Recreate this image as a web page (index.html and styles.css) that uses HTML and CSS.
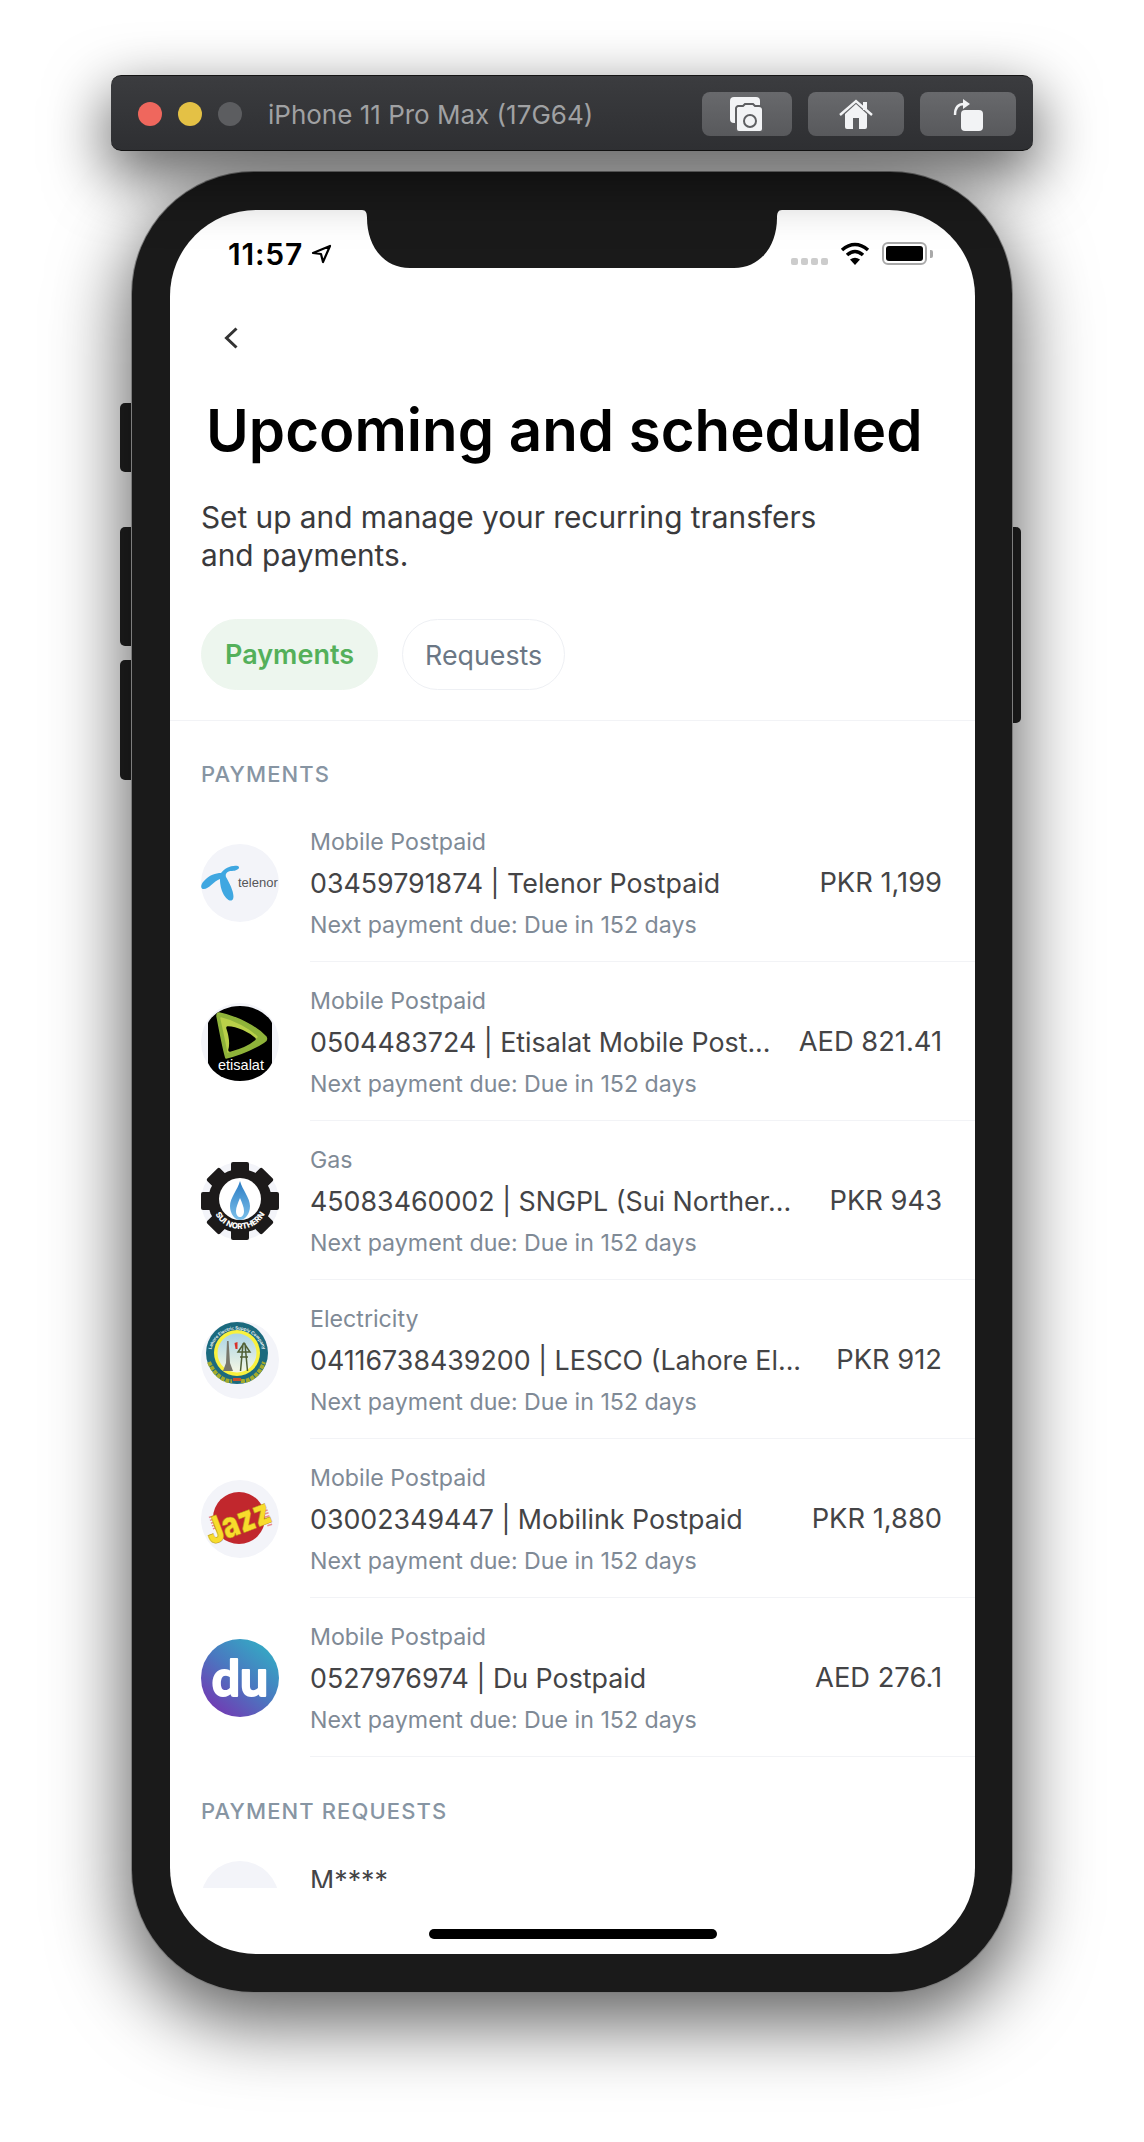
FILE: index.html
```html
<!DOCTYPE html>
<html lang="en">
  <head>
    <meta charset="UTF-8" />
    <title>Upcoming and scheduled</title>
    <link rel="stylesheet" href="styles.css">
  </head>
  <body>
    <div class="toolbar">
      <span class="light red"></span>
      <span class="light yellow"></span>
      <span class="light gray"></span>
      <span class="device-name">iPhone 11 Pro Max (17G64)</span>
      <div class="tool-btn tool-camera">
        <svg width="34" height="35" viewBox="0 0 34 35">
          <rect x="0" y="0" width="30" height="26" rx="4" fill="#f2f3f5" />
          <path d="M8 9h5l2-2h8l2 2h4a4 4 0 0 1 4 4v19a3 3 0 0 1-3 3H9a3 3 0 0 1-3-3V11a3 3 0 0 1 2-2z" fill="#f2f3f5" stroke="#5e5f62" stroke-width="2" />
          <circle cx="20" cy="24" r="6" fill="none" stroke="#5e5f62" stroke-width="2" />
        </svg>
      </div>
      <div class="tool-btn tool-home">
        <svg width="34" height="31" viewBox="0 0 34 31">
          <rect x="24" y="3" width="4" height="8" fill="#f2f3f5" />
          <path d="M6 15L17 5l11 10v13a2 2 0 0 1-2 2H8a2 2 0 0 1-2-2z" fill="#f2f3f5" />
          <path d="M1 16L17 2l16 14" fill="none" stroke="#f2f3f5" stroke-width="2.4" />
          <rect x="14" y="19" width="6" height="11" fill="#5e5f62" />
        </svg>
      </div>
      <div class="tool-btn tool-rotate">
        <svg width="31" height="33" viewBox="0 0 31 33">
          <rect x="8" y="12" width="22" height="21" rx="4" fill="#f2f3f5" />
          <path d="M2 17C2 10 5 6 11 6" fill="none" stroke="#f2f3f5" stroke-width="2.4" />
          <path d="M10 1l7 5-7 5z" fill="#f2f3f5" />
        </svg>
      </div>
    </div>

    <div class="phone">
      <span class="side-btn btn-mute"></span>
      <span class="side-btn btn-up"></span>
      <span class="side-btn btn-down"></span>
      <span class="side-btn btn-power"></span>

      <div class="screen">
        <svg class="notch" width="420" height="58" viewBox="0 0 420 58">
          <path d="M0 0C4 0 5 3 5 8C5 34 20 58 48 58H372C400 58 415 34 415 8C415 3 416 0 420 0Z" fill="#1a1a1a" />
        </svg>

        <div class="scroll">
          <div class="status-bar">
            <div class="status-left">
              <span class="time">11:57</span>
              <svg width="21" height="20" viewBox="0 0 21 20">
                <path d="M2 9L19 2l-7 16-2-8z" fill="none" stroke="#000" stroke-width="2.2" stroke-linejoin="round" />
              </svg>
            </div>
            <div class="status-right">
              <div class="signal"><i></i><i></i><i></i><i></i></div>
              <svg class="wifi" width="30" height="23" viewBox="0 0 30 23">
                <path d="M2 8Q15 -3 28 8" fill="none" stroke="#000" stroke-width="3.6" />
                <path d="M7 13Q15 6 23 13" fill="none" stroke="#000" stroke-width="3.6" />
                <path d="M10 17.5Q15 14 20 17.5L15 23z" fill="#000" />
              </svg>
              <div class="battery"><span class="battery-level"></span></div>
              <span class="battery-nub"></span>
            </div>
          </div>

          <div class="nav">
            <svg width="14" height="22" viewBox="0 0 14 22">
              <path d="M12.5 1.5L2.5 11l10 9.5" fill="none" stroke="#333" stroke-width="3" />
            </svg>
          </div>

          <h1 class="title">Upcoming and scheduled</h1>
          <p class="subtitle">Set up and manage your recurring transfers<br>and payments.</p>

          <div class="tabs">
            <div class="tab tab-active">Payments</div>
            <div class="tab">Requests</div>
          </div>

          <div class="section-head section-first">PAYMENTS</div>

          <div class="row">
            <svg class="logo" viewBox="0 0 78 78">
              <circle cx="39" cy="39" r="39" fill="#f3f4f9" />
              <path d="M37 22C40 24 36 27 31 27C26 27 24 30 25 33C29 40 34 50 32 55C30 59 24 55 21 47C19 41 19 37 19 35C13 37 7 46 2 45C-1 44 0 40 3 37C8 31 15 29 20 29C24 24 30 21 37 22Z" fill="#3fa7e1" />
              <text class="logo-telenor" x="37" y="43">telenor</text>
            </svg>
            <div class="row-body">
              <div class="row-label">Mobile Postpaid</div>
              <div class="row-main"><span>03459791874 | Telenor Postpaid</span><span class="row-amount">PKR 1,199</span></div>
              <div class="row-due">Next payment due: Due in 152 days</div>
            </div>
          </div>

          <div class="row">
            <svg class="logo" viewBox="0 0 78 78">
              <circle cx="39" cy="39" r="39" fill="#f3f4f9" />
              <path d="M7 20C12 10 25 3 39 3C53 3 66 10 71 20V60C66 71 53 78 39 78C25 78 12 71 7 60Z" fill="#000" />
              <path d="M18 10C35 13 56 24 65 34C66 36 65 38 63 39C52 46 38 52 25 55C23 50 20 34 16 13C16 11 16 10 18 10Z" fill="#8fb33a" stroke="#8fb33a" stroke-width="1.5" stroke-linejoin="round" />
              <path d="M20 15C33 18 48 26 56 34C47 41 37 46 27 49C26 42 23 29 20 15Z" fill="#b9d049" stroke="#b9d049" stroke-width="1.5" stroke-linejoin="round" />
              <path d="M27 25C36 25 47 31 53 36C47 41 37 45 29 47C31 40 29 31 27 25Z" fill="#000" stroke="#000" stroke-width="3.5" stroke-linejoin="round" />
              <text class="logo-etisalat" x="40" y="67">etisalat</text>
            </svg>
            <div class="row-body">
              <div class="row-label">Mobile Postpaid</div>
              <div class="row-main"><span>0504483724 | Etisalat Mobile Post...</span><span class="row-amount">AED 821.41</span></div>
              <div class="row-due">Next payment due: Due in 152 days</div>
            </div>
          </div>

          <div class="row">
            <svg class="logo" viewBox="0 0 78 78">
              <defs>
                <path id="sui-arc" d="M11 39A28 28 0 0 0 67 39" />
                <linearGradient id="flame" x1="0" y1="0" x2="0" y2="1">
                  <stop offset="0" stop-color="#2a7cc4" />
                  <stop offset="1" stop-color="#7cc0ea" />
                </linearGradient>
              </defs>
              <circle cx="39" cy="39" r="39" fill="#f3f4f9" />
              <g fill="#1c1a1a">
                <circle cx="39" cy="39" r="32" />
                <rect x="30" y="0" width="18" height="78" rx="2" />
                <rect x="0" y="30" width="78" height="18" rx="2" />
                <rect x="30" y="0" width="18" height="78" rx="2" transform="rotate(45 39 39)" />
                <rect x="30" y="0" width="18" height="78" rx="2" transform="rotate(-45 39 39)" />
              </g>
              <circle cx="39" cy="37" r="21" fill="#fff" />
              <path d="M39 19C41 27 49 36 49 44C49 52 44 58 39 58C34 58 29 52 29 44C29 36 37 27 39 19Z" fill="url(#flame)" />
              <path d="M39 36C41 41 43 45 43 49C43 53 41 55 39 55C37 55 35 53 35 49C35 45 37 41 39 36Z" fill="#fff" />
              <text class="logo-sui"><textPath href="#sui-arc" startOffset="50%">SUI NORTHERN</textPath></text>
            </svg>
            <div class="row-body">
              <div class="row-label">Gas</div>
              <div class="row-main"><span>45083460002 | SNGPL (Sui Norther...</span><span class="row-amount">PKR 943</span></div>
              <div class="row-due">Next payment due: Due in 152 days</div>
            </div>
          </div>

          <div class="row">
            <svg class="logo" viewBox="0 0 78 78">
              <defs>
                <path id="lesco-arc" d="M9.5 35A26.5 26.5 0 0 1 62.5 35" />
                <linearGradient id="lesco-sky" x1="0" y1="0" x2="0" y2="1">
                  <stop offset="0" stop-color="#a9d3e6" />
                  <stop offset="1" stop-color="#f6f8e4" />
                </linearGradient>
              </defs>
              <circle cx="39" cy="39" r="39" fill="#f3f4f9" />
              <circle cx="36" cy="32" r="31" fill="#1b6a7e" />
              <circle cx="36" cy="32" r="23" fill="#f8f13e" />
              <circle cx="36" cy="32" r="19.5" fill="url(#lesco-sky)" />
              <text class="logo-lesco"><textPath href="#lesco-arc" startOffset="50%">Lahore Electric Supply Company</textPath></text>
              <path d="M26 20h1.6l1.4 22 3 8h-10l3-8z" fill="#77776c" />
              <path d="M33.5 22l3-1v7h-2z" fill="#d8312a" />
              <path d="M37 31h12l-6-9-6 9h12M39 36h8M39.5 50l2.5-27h2l2.5 27" fill="none" stroke="#4f5f34" stroke-width="1.5" />
              <path d="M8 41C13 53 23 61 31 60M40 60C49 61 59 53 63 41" fill="none" stroke="#a3ab2c" stroke-width="4" stroke-dasharray="4 1" />
              <rect x="32" y="57" width="8" height="3" fill="#c9522e" />
            </svg>
            <div class="row-body">
              <div class="row-label">Electricity</div>
              <div class="row-main"><span>04116738439200 | LESCO (Lahore El...</span><span class="row-amount">PKR 912</span></div>
              <div class="row-due">Next payment due: Due in 152 days</div>
            </div>
          </div>

          <div class="row">
            <svg class="logo" viewBox="0 0 78 78">
              <circle cx="39" cy="39" r="39" fill="#f3f4f9" />
              <circle cx="38" cy="38" r="26" fill="#c1272d" />
              <path d="M10 36l5 14M64 30l5 16" fill="none" stroke="#e88a94" stroke-width="5" stroke-dasharray="1.5 1.5" />
              <text class="logo-jazz" transform="rotate(-21 37 42) translate(37 54) scale(1 1.3)">Jazz</text>
            </svg>
            <div class="row-body">
              <div class="row-label">Mobile Postpaid</div>
              <div class="row-main"><span>03002349447 | Mobilink Postpaid</span><span class="row-amount">PKR 1,880</span></div>
              <div class="row-due">Next payment due: Due in 152 days</div>
            </div>
          </div>

          <div class="row">
            <svg class="logo" viewBox="0 0 78 78">
              <defs>
                <linearGradient id="du-grad" x1="0.85" y1="0.1" x2="0.2" y2="0.9">
                  <stop offset="0" stop-color="#35a8c4" />
                  <stop offset="0.5" stop-color="#4a78c0" />
                  <stop offset="1" stop-color="#6f3fb4" />
                </linearGradient>
              </defs>
              <circle cx="39" cy="39" r="39" fill="url(#du-grad)" />
              <text class="logo-du" x="39" y="57">du</text>
            </svg>
            <div class="row-body">
              <div class="row-label">Mobile Postpaid</div>
              <div class="row-main"><span>0527976974 | Du Postpaid</span><span class="row-amount">AED 276.1</span></div>
              <div class="row-due">Next payment due: Due in 152 days</div>
            </div>
          </div>

          <div class="section-head">PAYMENT REQUESTS</div>

          <div class="row row-request">
            <svg class="logo" viewBox="0 0 78 78">
              <circle cx="39" cy="39" r="39" fill="#f3f4f9" />
            </svg>
            <div class="row-body">
              <div class="row-main"><span>M****</span></div>
            </div>
          </div>
        </div>

        <div class="home-area"><span class="home-bar"></span></div>
      </div>
    </div>
  </body>
</html>
```

FILE: styles.css
```css
html,
body {
  margin: 0;
  height: 2142px;
}

body {
  font-family: "Inter", "Liberation Sans", sans-serif;
  background-color: #fff;
  display: flex;
  flex-direction: column;
  align-items: center;
  padding-top: 75px;
  box-sizing: border-box;
  overflow: hidden;
}

/* simulator title bar */
.toolbar {
  position: relative;
  z-index: 2;
  width: 922px;
  height: 76px;
  box-sizing: border-box;
  padding: 2px 17px 0 27px;
  display: flex;
  align-items: center;
  gap: 16px;
  background: linear-gradient(#3b3c3f, #2e2f32);
  border-top: 1px solid #151515;
  border-bottom: 1px solid #111;
  border-radius: 10px;
  box-shadow: 0 22px 60px 4px rgba(0, 0, 0, 0.6);
}

.light {
  width: 24px;
  height: 24px;
  border-radius: 50%;
}

.red {
  background-color: #ef675d;
}

.yellow {
  background-color: #e4c145;
}

.gray {
  background-color: #5c5d60;
}

.device-name {
  margin-left: 10px;
  margin-right: auto;
  font-size: 26px;
  color: #a0a1a3;
}

.tool-btn {
  height: 44px;
  display: flex;
  align-items: center;
  justify-content: center;
  background: linear-gradient(#68696c, #58595c);
  border-radius: 8px;
}

.tool-camera {
  width: 90px;
}

.tool-home,
.tool-rotate {
  width: 96px;
}

/* device */
.phone {
  position: relative;
  margin-top: 21px;
  width: 880px;
  height: 1820px;
  box-sizing: border-box;
  padding: 38px 37px 38px 38px;
  background-color: #1a1a1a;
  border-radius: 122px;
  box-shadow: 0 0 0 1px #7d7d7d, 0 25px 75px 6px rgba(0, 0, 0, 0.62);
}

.side-btn {
  position: absolute;
  width: 14px;
  background-color: #222;
  z-index: -1;
}

.btn-mute {
  left: -12px;
  top: 231px;
  height: 69px;
  border-radius: 5px 0 0 5px;
}

.btn-up {
  left: -12px;
  top: 355px;
  height: 119px;
  border-radius: 5px 0 0 5px;
}

.btn-down {
  left: -12px;
  top: 488px;
  height: 120px;
  border-radius: 5px 0 0 5px;
}

.btn-power {
  right: -9px;
  top: 355px;
  height: 196px;
  border-radius: 0 5px 5px 0;
}

.screen {
  position: relative;
  height: 100%;
  background-color: #fff;
  border-radius: 86px;
  overflow: hidden;
  display: flex;
  flex-direction: column;
}

.notch {
  position: absolute;
  top: 0;
  left: 192px;
}

.scroll {
  height: 1678px;
  overflow: hidden;
  flex-shrink: 0;
}

.status-bar {
  height: 90px;
  box-sizing: border-box;
  padding: 32px 42px 0 58px;
  display: flex;
  justify-content: space-between;
  align-items: flex-start;
}

.status-left,
.status-right {
  display: flex;
  align-items: center;
  height: 23px;
}

.status-left {
  gap: 8px;
}

.time {
  font-size: 30px;
  font-weight: 600;
  letter-spacing: 0.8px;
  color: #000;
}

.signal {
  display: flex;
  gap: 3px;
  align-self: flex-end;
  margin-right: 12px;
}

.signal i {
  width: 7px;
  height: 7px;
  border-radius: 2px;
  background-color: #ccc;
}

.wifi {
  margin-right: 12px;
}

.battery {
  width: 45px;
  height: 23px;
  box-sizing: border-box;
  padding: 2px;
  border: 2px solid #a9a9a9;
  border-radius: 6px;
}

.battery-level {
  display: block;
  height: 100%;
  background-color: #000;
  border-radius: 3px;
}

.battery-nub {
  width: 3px;
  height: 8px;
  margin-left: 3px;
  background-color: #a9a9a9;
  border-radius: 0 2px 2px 0;
}

.nav {
  height: 76px;
  padding-left: 54px;
  display: flex;
  align-items: center;
}

.title {
  margin: 19px 0 0;
  padding-left: 36px;
  font-size: 58.2px;
  line-height: 70px;
  font-weight: 600;
  color: #000;
  white-space: nowrap;
}

.subtitle {
  margin: 33px 0 0;
  padding-left: 31px;
  font-size: 29.8px;
  line-height: 38px;
  color: #3a3a3c;
}

.tabs {
  margin-top: 45px;
  padding: 0 31px 30px;
  display: flex;
  gap: 24px;
  border-bottom: 1px solid #f2f3f6;
}

.tab {
  height: 71px;
  box-sizing: border-box;
  padding: 0 22px;
  display: flex;
  align-items: center;
  font-size: 26.8px;
  color: #6b7785;
  border: 1px solid #eef0f4;
  border-radius: 36px;
}

.tab-active {
  padding: 0 23px;
  font-size: 27px;
  font-weight: 600;
  color: #54b05a;
  background-color: #edf6ee;
  border-color: #edf6ee;
}

.section-head {
  padding: 39px 31px 14px;
  font-size: 22px;
  line-height: 30px;
  font-weight: 500;
  letter-spacing: 1.1px;
  color: #8795a3;
}

.section-first {
  padding-top: 38px;
}

.row {
  height: 159px;
  padding-left: 31px;
  display: flex;
  align-items: center;
  gap: 31px;
}

.logo {
  width: 78px;
  height: 78px;
  flex-shrink: 0;
}

.row-body {
  flex: 1;
  height: 159px;
  box-sizing: border-box;
  padding: 24px 33px 0 0;
  border-bottom: 1px solid #f2f3f6;
}

.row-label {
  font-size: 23.2px;
  line-height: 30px;
  color: #7f8a96;
}

.row-main {
  display: flex;
  justify-content: space-between;
  margin-bottom: 2px;
  font-size: 26.8px;
  line-height: 52px;
  color: #444446;
  white-space: nowrap;
}

.row-amount {
  font-size: 27.3px;
}

.row-due {
  font-size: 23.2px;
  line-height: 28px;
  color: #7f8a96;
}

.row-request {
  height: 120px;
}

.row-request .row-body {
  height: 120px;
  padding-top: 14px;
}

.home-area {
  flex: 1;
  display: flex;
  justify-content: center;
  align-items: flex-end;
  padding-bottom: 15px;
}

.home-bar {
  width: 288px;
  height: 10px;
  background-color: #000;
  border-radius: 5px;
}

/* logo lettering */
.logo-telenor {
  font-family: "Liberation Sans", sans-serif;
  font-size: 13px;
  fill: #55565a;
}

.logo-etisalat {
  font-family: "Liberation Sans", sans-serif;
  font-size: 14.5px;
  fill: #fff;
  text-anchor: middle;
}

.logo-sui {
  font-size: 8px;
  font-weight: 800;
  fill: #fff;
  text-anchor: middle;
}

.logo-lesco {
  font-size: 4.4px;
  font-weight: 600;
  fill: #fff;
  text-anchor: middle;
}

.logo-jazz {
  font-size: 28px;
  font-weight: 900;
  fill: #f8dc2c;
  stroke: #b08f12;
  stroke-width: 0.4px;
  text-anchor: middle;
}

.logo-du {
  font-family: "Lato", sans-serif;
  font-size: 50px;
  font-weight: 700;
  fill: #fff;
  stroke: #fff;
  stroke-width: 2px;
  stroke-linejoin: round;
  text-anchor: middle;
}
```
